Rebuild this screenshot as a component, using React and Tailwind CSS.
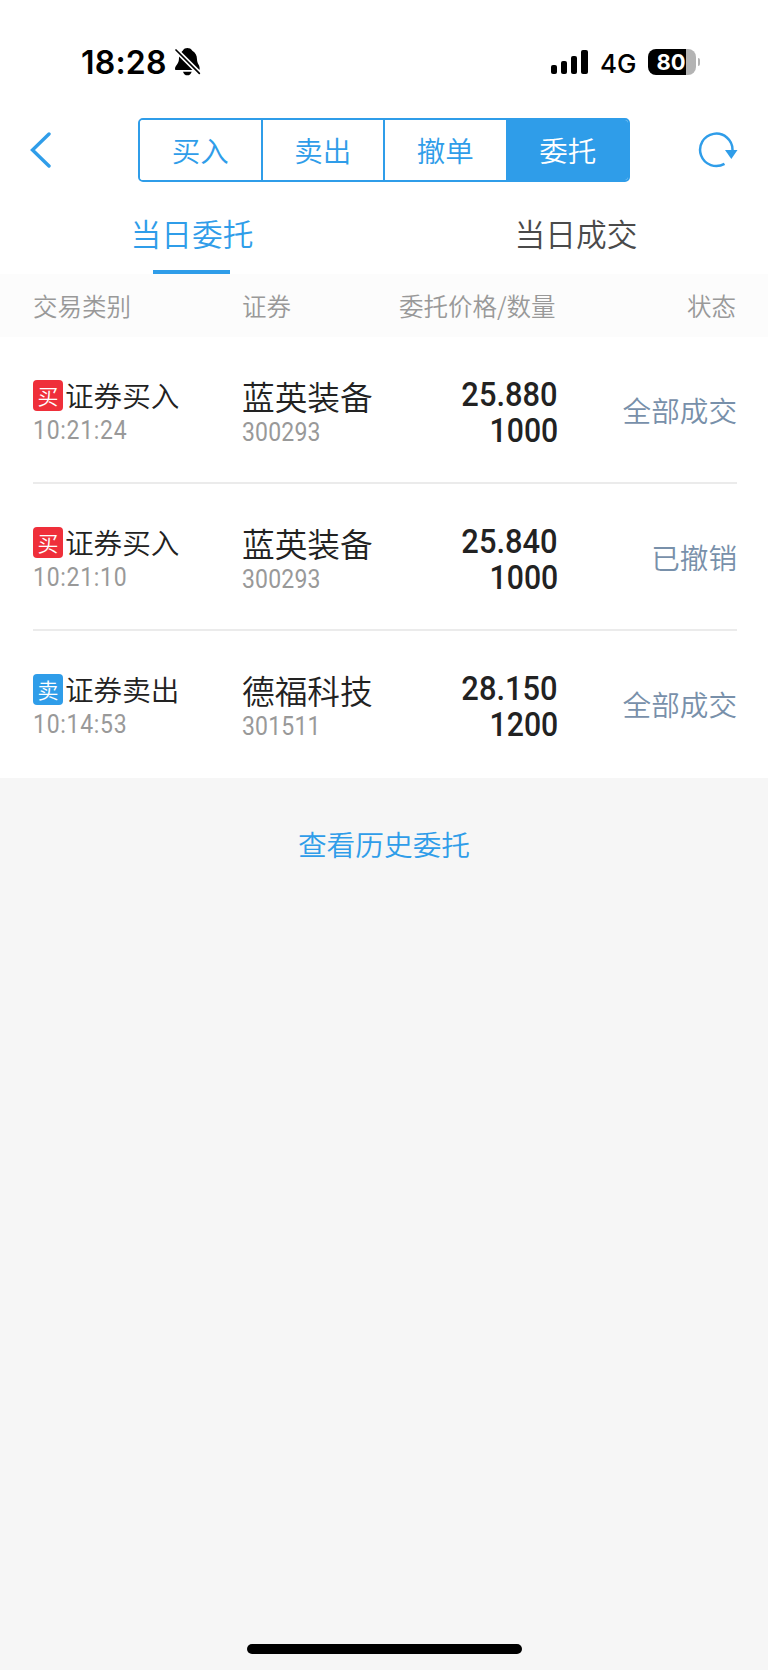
import clsx from "clsx";

const segments = ["买入", "卖出", "撤单", "委托"];

const orders = [
    { side: "buy", type: "证券买入", time: "10:21:24", name: "蓝英装备", code: "300293", price: "25.880", amount: "1000", status: "全部成交" },
    { side: "buy", type: "证券买入", time: "10:21:10", name: "蓝英装备", code: "300293", price: "25.840", amount: "1000", status: "已撤销" },
    { side: "sell", type: "证券卖出", time: "10:14:53", name: "德福科技", code: "301511", price: "28.150", amount: "1200", status: "全部成交" },
];

function BellOff() {
    return (
        <svg className="w-[26px] h-7" viewBox="0 0 78 84">
            <path d="M23 8C26 2 32 0 37 0s12 2 15 8c9 5 14 14 14 26c0 14 8 16 8 28c0 3-1 4-4 4H4c-3 0-4-1-4-4c0-11 12-12 12-32c0-9 4-17 11-22z" />
            <path d="M24 71h26c-2 7-7 11-13 11s-11-4-13-11z" />
            <path d="M-2 1L78 81" stroke="#fff" strokeWidth="15" />
            <path d="M3 6L73 76" stroke="#000" strokeWidth="5" strokeLinecap="round" />
        </svg>
    );
}

function StatusBar() {
    return (
        <div className="flex items-center h-[106px] pt-[18px] pl-[81px] pr-[68px] font-['Inter',sans-serif] text-black">
            <span className="text-[32px] font-semibold leading-8 w-[94px] pt-[2px] tracking-[0.2px]">18:28</span>
            <BellOff />
            <div className="flex items-center ml-auto">
                <div className="flex items-end gap-1 h-6">
                    <i className="w-[6px] h-[9px] rounded-[2px] bg-black" />
                    <i className="w-[6px] h-[13px] rounded-[2px] bg-black" />
                    <i className="w-[6px] h-[18px] rounded-[2px] bg-black" />
                    <i className="w-[7px] h-[24px] rounded-[2px] bg-black" />
                </div>
                <span className="ml-3 mt-[3px] w-[48px] text-[26px] leading-7 font-medium">4G</span>
                <div className="w-12 h-[26px] rounded-[8px] bg-linear-to-r from-black from-80% to-[#b3b3b3] to-80% pr-[2px] text-center text-[22px] leading-[27px] font-bold text-white">
                    80
                </div>
                <i className="w-[2px] h-2 ml-[2px] rounded-r-full bg-[#b3b3b3]" />
            </div>
        </div>
    );
}

function NavBar() {
    return (
        <div className="flex items-center h-[88px] px-[30px]">
            <svg className="w-[22px] h-9" viewBox="0 0 22 36" fill="none" stroke="#2f9de9" strokeWidth="3.4" strokeLinecap="round">
                <path d="M19 2L2.5 18L19 34" />
            </svg>
            <div className="flex w-[492px] h-16 ml-[86px] overflow-hidden rounded-[5px] border-2 border-[#2f9de9] divide-x-2 divide-[#2f9de9]">
                {segments.map((label) => (
                    <button
                        key={label}
                        className={clsx("flex-1 text-[28.5px] leading-[60px]", label === "委托" ? "bg-[#2f9de9] text-white" : "bg-white text-[#2f9de9]")}>
                        {label}
                    </button>
                ))}
            </div>
            <svg className="w-10 h-9 ml-auto" viewBox="0 0 40 36" fill="none">
                <path d="M26.5 31.8A16.2 16.2 0 1 1 34.5 18" stroke="#2f9de9" strokeWidth="2.5" />
                <path d="M27 18h12.5l-6.2 9z" fill="#2f9de9" />
            </svg>
        </div>
    );
}

function Tabs() {
    return (
        <div className="grid grid-cols-2 h-20 text-center text-[30.7px] leading-[78px]">
            <div className="flex flex-col items-center text-[#2f9de9]">
                <span className="h-[76px]">当日委托</span>
                <span className="w-[77px] h-1 mr-[1px] bg-[#2f9de9]" />
            </div>
            <div className="text-[#4a4a4a]">当日成交</div>
        </div>
    );
}

function OrderRow({ order }) {
    return (
        <li className="flex h-[147px] ml-[33px] mr-[31px] border-b-2 border-[#ebebeb] last:border-transparent">
            <div className="w-[209px] pt-[42px]">
                <div className="flex items-center h-[33px] text-[28.6px] leading-[31px] text-[#222]">
                    <span
                        className={clsx(
                            "w-[30px] h-[31px] mr-[2px] rounded-[4px] text-center text-[21px] leading-[31px] text-white",
                            order.side === "buy" ? "bg-[#ef2f3a]" : "bg-[#2f9de9]"
                        )}>
                        {order.side === "buy" ? "买" : "卖"}
                    </span>
                    <span className="h-[33px]">{order.type}</span>
                </div>
                <div className="w-fit origin-left scale-x-[0.885] pt-px font-['Roboto',sans-serif] font-normal text-[26px] leading-[34px] tracking-[0.8px] text-[#999]">
                    {order.time}
                </div>
            </div>
            <div className="w-[160px] pt-[42px]">
                <div className="text-[32.7px] leading-[34px] text-[#222]">{order.name}</div>
                <div className="w-fit origin-left scale-x-[0.885] pt-[2px] font-['Roboto',sans-serif] font-normal text-[26px] leading-[34px] tracking-[0.2px] text-[#999]">
                    {order.code}
                </div>
            </div>
            <div className="w-[156px] pt-10 flex flex-col items-end font-['Roboto',sans-serif] font-medium text-[33.5px] leading-[35.5px] text-[#222]">
                <div className="origin-right scale-x-[0.92]">{order.price}</div>
                <div className="origin-right scale-x-[0.9]">{order.amount}</div>
            </div>
            <div className="flex-1 text-right text-[28.6px] leading-[145px] text-[#7890aa]">{order.status}</div>
        </li>
    );
}

export default function App() {
    return (
        <div className="flex flex-col w-[768px] h-[1670px] bg-[#f6f6f6] font-['Noto_Sans_CJK_SC',sans-serif] font-[350]">
            <header className="bg-white">
                <StatusBar />
                <NavBar />
                <Tabs />
            </header>
            <div className="flex h-[63px] pl-[33px] pr-[32px] bg-[#fcfcfc] text-[24.5px] leading-[64px] text-[#999]">
                <span className="w-[209px]">交易类别</span>
                <span className="w-[157px]">证券</span>
                <span className="w-[160px]">委托价格/数量</span>
                <span className="flex-1 text-right">状态</span>
            </div>
            <ul className="bg-white">
                {orders.map((order) => (
                    <OrderRow key={order.time} order={order} />
                ))}
            </ul>
            <button className="self-center mt-[45px] text-[28.7px] leading-[42px] text-[#2f9de9]">查看历史委托</button>
            {/* home indicator */}
            <div className="self-center w-[275px] h-[10px] mt-auto mb-[16px] rounded-full bg-black" />
        </div>
    );
}
